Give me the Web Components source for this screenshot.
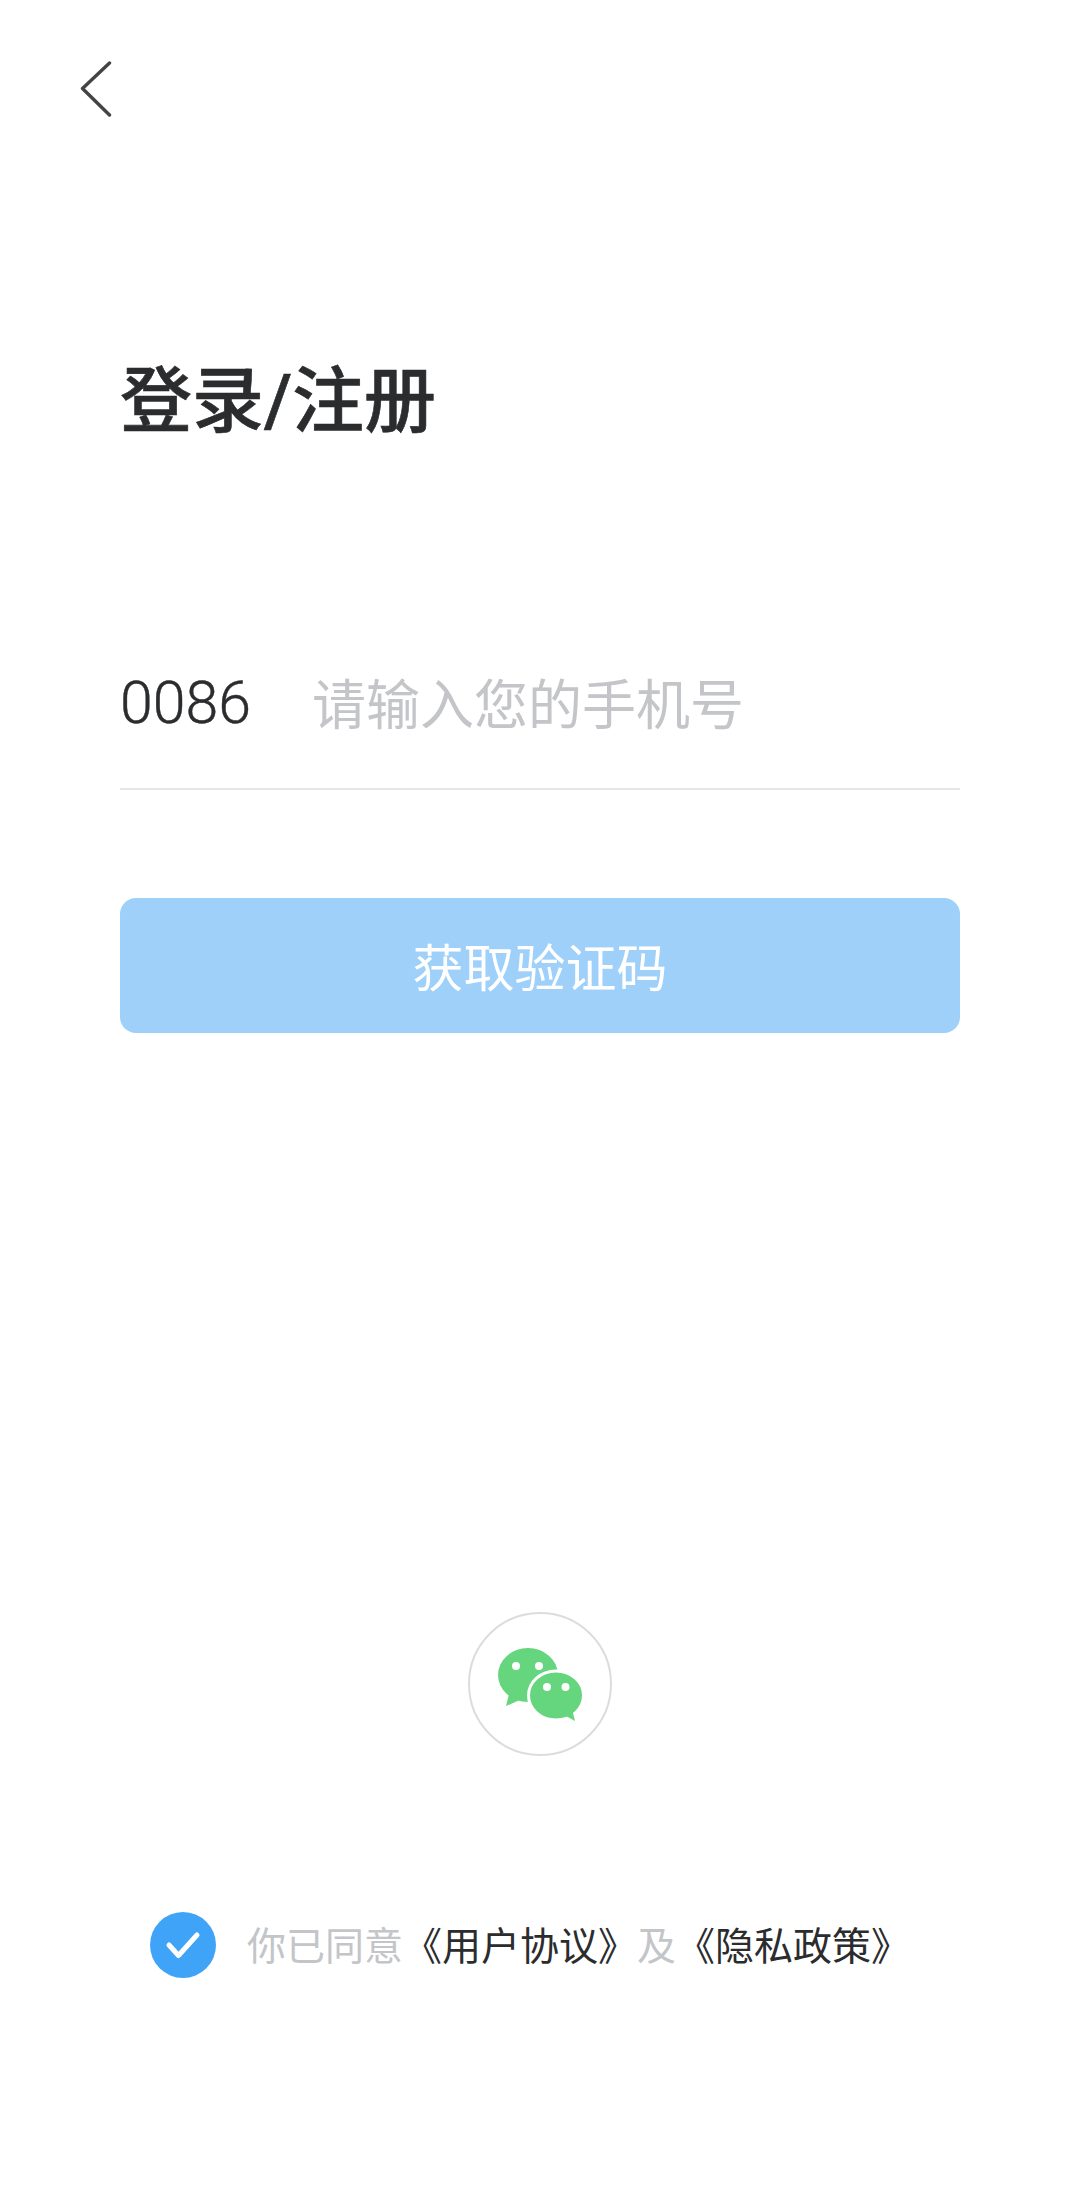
<!DOCTYPE html>
<html lang="zh"><head><meta charset="utf-8"><style>
html,body{margin:0;padding:0;background:#fff}
body{font-family:"Noto Sans CJK SC","Noto Sans",sans-serif}
</style></head><body>
<login-page></login-page>
<script>
const def=(name,html)=>customElements.define(name,class extends HTMLElement{constructor(){super();this.attachShadow({mode:'open'}).innerHTML=html}});
def('back-button',`<style>:host{display:block;height:56px;padding:61px 0 0 80px}svg{display:block}</style>
<svg width="32" height="56" viewBox="0 0 32 56"><path d="M29.500 2 2.500 27.500 29.500 54" fill="none" stroke="#444" stroke-width="3.400" stroke-linecap="round" stroke-linejoin="round"/></svg>`);
def('page-title',`<style>:host{display:block;margin:239px 0 0 120px;font:500 72px/92px Roboto,"Noto Sans CJK SC",sans-serif;color:#2b2c2e;-webkit-text-stroke:.6px #2b2c2e}</style><slot></slot>`);
def('phone-field',`<style>:host{display:flex;align-items:center;margin:212px 120px 0;height:84px;border-bottom:2px solid #e6e6ea;padding-bottom:44px}
.c{font:300 59px/1 Roboto,"Noto Sans",sans-serif;color:#2b2c2e;width:192px;-webkit-text-stroke:.4px #2b2c2e}
.p{font:400 54px/1 "Noto Sans CJK SC",sans-serif;color:#c3c5c8}</style>
<span class="c"><slot name="code"></slot></span><span class="p"><slot name="hint"></slot></span>`);
def('primary-button',`<style>:host{display:flex;align-items:center;justify-content:center;margin:108px 120px 0;height:135px;border-radius:16px;background:#9ed0fa;color:#fff;font:400 51px/1 "Noto Sans CJK SC",sans-serif}</style><slot></slot>`);
def('wechat-button',`<style>:host{display:block;box-sizing:border-box;width:144px;height:144px;margin:579px auto 0;border:2px solid #dcdcde;border-radius:50%;position:relative}svg{position:absolute;left:26px;top:32px}</style>
<svg width="88" height="78" viewBox="0 0 88 78"><ellipse cx="32" cy="29" rx="30" ry="27" fill="#65d67d"/><path d="M13 48 10 60 26 53Z" fill="#65d67d"/>
<ellipse cx="60" cy="49.500" rx="27.500" ry="24.500" fill="#65d67d" stroke="#fff" stroke-width="3"/><path d="M70 70 79 75 76.500 65Z" fill="#65d67d"/>
<g fill="#fff"><circle cx="20" cy="20" r="4"/><circle cx="43" cy="20" r="4"/><circle cx="51" cy="41" r="4"/><circle cx="69.500" cy="41" r="4"/></g></svg>`);
def('agree-row',`<style>:host{display:flex;align-items:center;gap:31px;margin:156px 0 0 150px;height:66px;font:400 39px/1 "Noto Sans CJK SC",sans-serif;color:#c3c5c8;white-space:nowrap}
svg{flex:none;display:block}span{margin-top:-4px}</style>
<svg width="66" height="66" viewBox="0 0 66 66"><circle cx="33" cy="33" r="33" fill="#3fa4f8"/><path d="M19 33 28.500 43.500 47 23" fill="none" stroke="#fff" stroke-width="5" stroke-linecap="round" stroke-linejoin="round"/></svg><span><slot></slot></span>`);
def('legal-link',`<style>:host{color:#2b2c2e}</style><slot></slot>`);
def('login-page',`<style>:host{display:block;width:1080px;height:2196px;overflow:hidden;background:#fff}</style>
<back-button></back-button><page-title>登录/注册</page-title>
<phone-field><span slot="code">0086</span><span slot="hint">请输入您的手机号</span></phone-field>
<primary-button>获取验证码</primary-button><wechat-button></wechat-button>
<agree-row>你已同意<legal-link>《用户协议》</legal-link>及<legal-link>《隐私政策》</legal-link></agree-row>`);
</script>
</body></html>
